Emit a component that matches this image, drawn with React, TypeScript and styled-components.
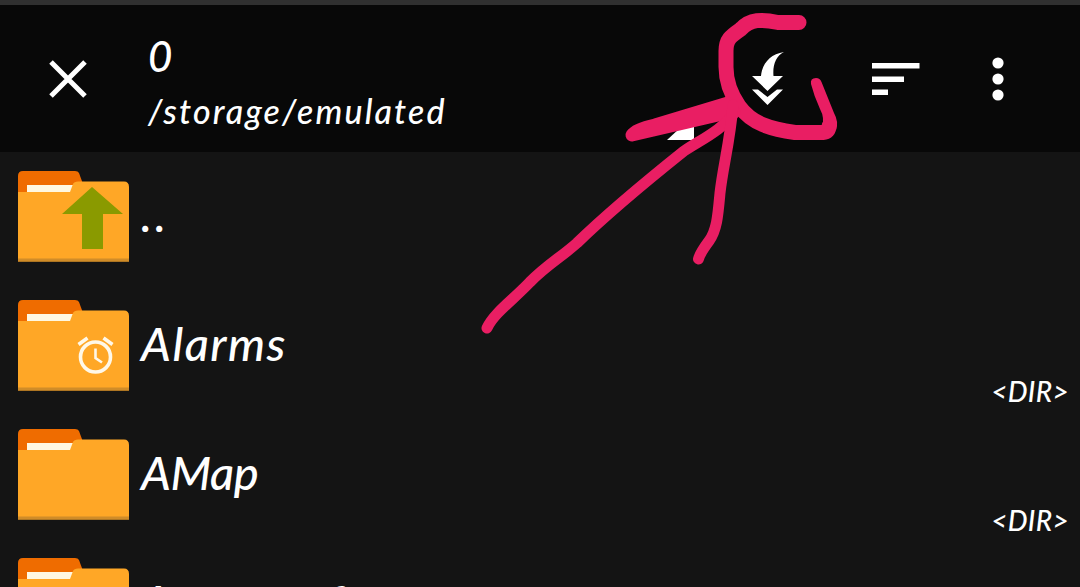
import React from "react";
import styled, { createGlobalStyle } from "styled-components";

type Badge = "up" | "alarm";

interface Entry {
  name: string;
  size?: string;
  badge?: Badge;
  spacing?: number;
}

const entries: Entry[] = [
  { name: "..", badge: "up", spacing: 3 },
  { name: "Alarms", size: "<DIR>", badge: "alarm", spacing: 1.5 },
  { name: "AMap", size: "<DIR>", spacing: -0.4 },
  { name: "Apowersoft", spacing: -1 },
];

const FolderIcon: React.FC<{ badge?: Badge }> = ({ badge }) => (
  <Folder viewBox="0 0 111 91">
    <path d="M0 22V5Q0 0 5 0H57Q60 0 61 2L65 13V22Z" fill="#ef6c00" />
    <path d="M9 14H57V21H9Z" fill="#fff8e1" />
    <path d="M0 21H52L55 13Q56 10.500 60 10.500H106Q111 10.500 111 16V90.500H0Z" fill="#ffa726" />
    <path d="M0 87.500H111V90.500H0Z" fill="#d08c28" />
    {badge === "up" && <path d="M74 16L105 43H85V78H64V43H44Z" fill="#8a9a00" />}
    {badge === "alarm" && (
      <g fill="none" stroke="#fff8e8" strokeWidth="3.600">
        <circle cx="77.500" cy="57" r="15" />
        <path d="M60.500 44.500L69.500 38M85.500 38L94.500 44.500" />
        <path d="M77.500 48.500V58L84 62.500" strokeWidth="2.600" />
      </g>
    )}
  </Folder>
);

const App: React.FC = () => {
  return (
    <Screen>
      <GlobalStyle />
      <StatusStrip />
      <Toolbar>
        <CloseButton aria-label="Close">
          <svg width="38" height="38" viewBox="0 0 38 38">
            <path d="M2 2L36 36M36 2L2 36" stroke="#fff" strokeWidth="5" />
          </svg>
        </CloseButton>
        <Titles>
          <Title>0</Title>
          <Path>/storage/emulated</Path>
        </Titles>
        <Actions>
          <IconButton aria-label="Storage">
            <svg width="27" height="27" viewBox="0 0 27 27">
              <path d="M27 1V26H0Z" fill="#fff" />
            </svg>
          </IconButton>
          <IconButton aria-label="Select">
            <svg width="32" height="54" viewBox="0 0 32 54">
              <path d="M32 0C24 4 20.500 13 21.500 24H31L15.500 39L0 24H9C10 12 18 2 32 0Z" fill="#fff" />
              <path d="M0 37.500H6L15.500 45L25 37.500H31L15.500 53Z" fill="#fff" />
            </svg>
          </IconButton>
          <IconButton aria-label="Sort">
            <svg width="48" height="32" viewBox="0 0 48 32">
              <path d="M0 0H47.500V5.500H0ZM0 13.500H32V19H0ZM0 26.500H16V32H0Z" fill="#fff" />
            </svg>
          </IconButton>
          <IconButton aria-label="More">
            <svg width="12" height="44" viewBox="0 0 12 44">
              <circle cx="6" cy="6" r="5.600" fill="#fff" />
              <circle cx="6" cy="22" r="5.600" fill="#fff" />
              <circle cx="6" cy="38" r="5.600" fill="#fff" />
            </svg>
          </IconButton>
        </Actions>
      </Toolbar>
      <List>
        {entries.map((entry) => (
          <Row key={entry.name}>
            <FolderIcon badge={entry.badge} />
            <Name $spacing={entry.spacing}>{entry.name}</Name>
            {entry.size && <Size>{entry.size}</Size>}
          </Row>
        ))}
      </List>
      <Marker viewBox="0 0 1080 587">
        <path
          d="M799 22.500H778C762 19 750 19 741 29C731 36 726 39 726 51V67C726 84 732 96 739 106C752 124 771 129 795 132.500H823Q829 132 829 126"
          strokeWidth="15"
        />
        <path d="M811 84Q810 78 816 78Q820 78 821.500 82L834 113Q839 122 836 130L822 128Q825 118 820 109Q814 96 811 84Z" fill="#e91e63" stroke="none" />
        <path d="M632 135Q636 129 655 125L728 103L731 112L688 122Z" strokeWidth="13" fill="#e91e63" />
        <path d="M487 328C494 313 513 300 530 282C548 264 560 258 577 243C610 211 649 179 684 151C704 138 722 130 735 112" strokeWidth="11" />
        <path d="M733 105C730 142 723 166 720 193C718 215 717 230 709 241Q700 253 698.500 259" strokeWidth="11" />
      </Marker>
    </Screen>
  );
};

export default App;

const GlobalStyle = createGlobalStyle`
  body {
    margin: 0;
    background: #141414;
    overflow: hidden;
  }
`;

const Screen = styled.div`
  position: relative;
  width: 1080px;
  height: 587px;
  display: flex;
  flex-direction: column;
  overflow: hidden;
  background: #141414;
  color: #fff;
  font-family: Lato, "Open Sans", sans-serif;
  font-style: italic;
  font-weight: 500;
`;

const StatusStrip = styled.div`
  flex: none;
  height: 5px;
  background: #303030;
`;

const Toolbar = styled.header`
  flex: none;
  height: 147px;
  display: flex;
  align-items: center;
  background: #080808;
`;

const IconButton = styled.button`
  display: flex;
  padding: 0;
  border: none;
  background: transparent;
`;

const CloseButton = styled(IconButton)`
  margin: 0 61px 0 49px;
`;

const Titles = styled.div`
  display: flex;
  flex-direction: column;
  gap: 11px;
  padding-top: 8px;
`;

const Title = styled.div`
  font-size: 42px;
  line-height: 46px;
`;

const Path = styled.div`
  font-size: 34px;
  line-height: 42px;
  letter-spacing: 2.1px;
`;

const Actions = styled.div`
  flex: 1;
  display: flex;
  align-items: center;
  justify-content: flex-end;
  padding-right: 76px;

  ${IconButton}:nth-child(1) {
    margin: 98px 58px 0 0;
  }
  ${IconButton}:nth-child(2) {
    margin-right: 88px;
  }
  ${IconButton}:nth-child(3) {
    margin-right: 72px;
  }
`;

const List = styled.main`
  flex: none;
`;

const Row = styled.div`
  height: 129px;
  box-sizing: border-box;
  display: flex;
  align-items: flex-start;
  padding: 19px 12px 0 18px;
`;

const Folder = styled.svg`
  flex: none;
  width: 111px;
  height: 91px;
`;

const Name = styled.div<{ $spacing?: number }>`
  margin: 16px 0 0 12px;
  font-size: 47px;
  line-height: 54px;
  letter-spacing: ${(props) => props.$spacing ?? 0}px;
`;

const Size = styled.div`
  margin: 75px -1px 0 auto;
  font-size: 28px;
  line-height: 32px;
  letter-spacing: 0.3px;
`;

const Marker = styled.svg`
  position: absolute;
  inset: 0;
  width: 1080px;
  height: 587px;
  pointer-events: none;
  fill: none;
  stroke: #e91e63;
  stroke-linecap: round;
  stroke-linejoin: round;
`;
